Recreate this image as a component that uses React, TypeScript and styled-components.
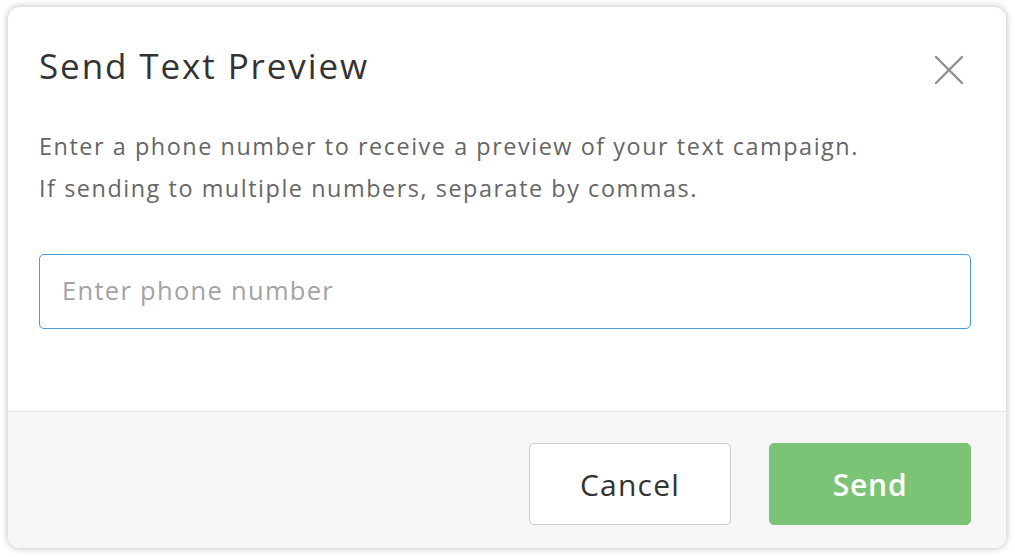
import React from "react";
import styled, { createGlobalStyle } from "styled-components";

const Global = createGlobalStyle`
  html, body { margin: 0; padding: 0; background: #ffffff; }
  body { font-family: "Open Sans", "Liberation Sans", sans-serif; }
  * { box-sizing: border-box; }
`;

const Page = styled.div`
  width: 1015px;
  height: 557px;
  padding: 7px 9px 9px 8px;
  background: #ffffff;
`;

const Modal = styled.div`
  width: 998px;
  height: 541px;
  display: flex;
  flex-direction: column;
  background: #ffffff;
  border-radius: 12px;
  box-shadow: 0 0 6px 1px rgba(0, 0, 0, 0.22);
  overflow: hidden;
`;

const Body = styled.div`
  flex: 1;
  display: flex;
  flex-direction: column;
  padding: 0 35px 0 31px;
`;

const Header = styled.div`
  display: flex;
  align-items: center;
  justify-content: space-between;
  height: 118px;
  padding-bottom: 2px;
`;

const Title = styled.h2`
  margin: 0;
  font-size: 35px;
  font-weight: 400;
  color: #333333;
  letter-spacing: 1.9px;
`;

const Close = styled.button`
  width: 32px;
  height: 32px;
  padding: 0;
  margin: 9px 6px 0 0;
  border: none;
  background: transparent;
  display: flex;
  align-items: center;
  justify-content: center;
  cursor: pointer;
`;

const Text = styled.p`
  margin: 0;
  font-size: 23.4px;
  line-height: 42px;
  color: #666666;
  letter-spacing: 1.55px;
`;

const Input = styled.input`
  margin-top: 45px;
  width: 932px;
  height: 75px;
  border: 1.5px solid #4a9bd7;
  border-radius: 5px;
  padding: 0 22px 3px;
  font-family: inherit;
  font-size: 25.5px;
  letter-spacing: 1.3px;
  color: #333;
  caret-color: #222;
  outline: none;
  &::placeholder { color: #a3a3a3; }
`;

const Footer = styled.div`
  height: 137px;
  background: #f7f7f7;
  border-top: 1px solid #e4e4e4;
  display: flex;
  justify-content: flex-end;
  align-items: flex-start;
  gap: 38px;
  padding: 31px 35px 0 0;
`;

const Button = styled.button<{ $primary?: boolean }>`
  width: 202px;
  height: 82px;
  border-radius: 5px;
  font-family: inherit;
  font-size: 30px;
  letter-spacing: ${(p) => (p.$primary ? "0.8px" : "1.2px")};
  font-weight: ${(p) => (p.$primary ? 600 : 400)};
  color: ${(p) => (p.$primary ? "#ffffff" : "#333333")};
  background: ${(p) => (p.$primary ? "#7bc476" : "#ffffff")};
  border: 1px solid ${(p) => (p.$primary ? "#7bc476" : "#cccccc")};
  cursor: pointer;
`;

export default function App() {
  return (
    <>
      <Global />
      <Page>
        <Modal>
          <Body>
            <Header>
              <Title>Send Text Preview</Title>
              <Close aria-label="Close">
                <svg width="30" height="30" viewBox="0 0 30 30">
                  <path d="M2 2 L28 28 M28 2 L2 28" stroke="#8f8f8f" strokeWidth="2.4" strokeLinecap="round" />
                </svg>
              </Close>
            </Header>
            <Text>Enter a phone number to receive a preview of your text campaign.</Text>
            <Text>If sending to multiple numbers, separate by commas.</Text>
            <Input placeholder="Enter phone number" autoFocus />
          </Body>
          <Footer>
            <Button>Cancel</Button>
            <Button $primary>Send</Button>
          </Footer>
        </Modal>
      </Page>
    </>
  );
}
